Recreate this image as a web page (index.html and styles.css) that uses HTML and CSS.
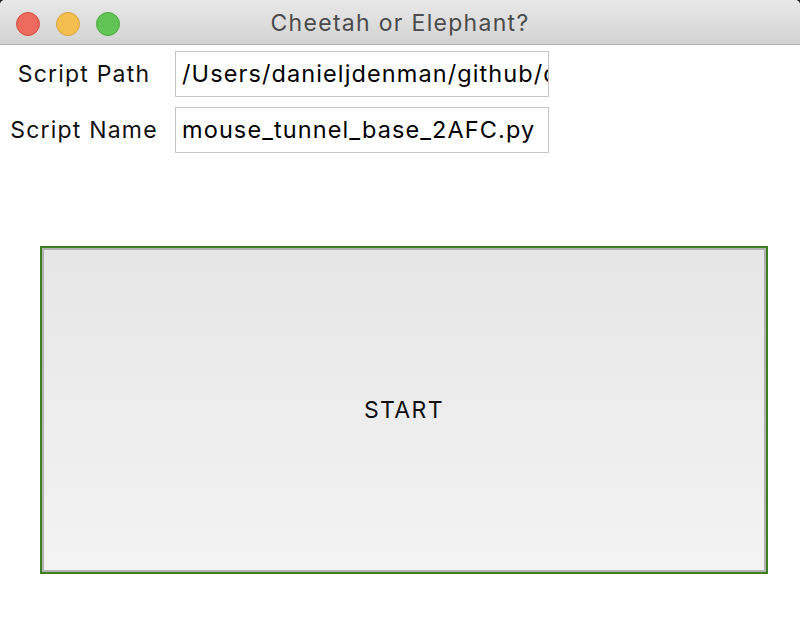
FILE: index.html
```html
<!DOCTYPE html>
<html>
<head>
<meta charset="utf-8">
<link rel="stylesheet" href="styles.css">
</head>
<body>
<div class="window">
  <div class="titlebar">
    <div class="lights">
      <span class="light red"></span>
      <span class="light yellow"></span>
      <span class="light green"></span>
    </div>
    <div class="title">Cheetah or Elephant?</div>
  </div>
  <div class="form">
    <label class="label">Script Path</label>
    <div class="input">/Users/danieljdenman/github/deepmouse</div>
    <label class="label">Script Name</label>
    <div class="input">mouse_tunnel_base_2AFC.py</div>
  </div>
  <div class="btnwrap">
    <button class="start">START</button>
  </div>
</div>
</body>
</html>
```
FILE: styles.css
```css
html, body {
  margin: 0;
  padding: 0;
  background: #1e1e1e;
}
.window {
  width: 800px;
  height: 644px;
  background: #ffffff;
  border-radius: 5px 5px 0 0;
  overflow: hidden;
  font-family: Inter, "Liberation Sans", sans-serif;
}
.titlebar {
  position: relative;
  height: 44px;
  background: linear-gradient(#e8e8e8, #d3d3d3);
  border-bottom: 1px solid #b1b1b1;
  display: flex;
  align-items: center;
  justify-content: center;
}
.lights {
  position: absolute;
  left: 16px;
  top: 12px;
  display: flex;
  gap: 16px;
}
.light {
  width: 24px;
  height: 24px;
  border-radius: 50%;
  box-sizing: border-box;
}
.red { background: #ed6a5e; border: 1px solid #d25145; }
.yellow { background: #f5bf4f; border: 1px solid #d6a03a; }
.green { background: #61c454; border: 1px solid #4ea63f; }
.title {
  font-size: 23px;
  color: #4b4b4b;
  padding-top: 1px;
  letter-spacing: 1.3px;
}
.form {
  display: grid;
  grid-template-columns: 168px 374px;
  column-gap: 7px;
  row-gap: 10px;
  padding-top: 6px;
  align-items: center;
}
.label {
  font-size: 23px;
  color: #111;
  text-align: center;
  letter-spacing: 1.2px;
}
.input {
  height: 46px;
  box-sizing: border-box;
  border: 1px solid #c6c6c6;
  font-size: 23.5px;
  color: #000;
  line-height: 44px;
  padding-left: 6px;
  white-space: nowrap;
  overflow: hidden;
  letter-spacing: 1.1px;
}
.btnwrap {
  padding: 93px 32px 0 40px;
}
.start {
  display: block;
  width: 728px;
  height: 328px;
  box-sizing: border-box;
  border: 2px solid #3e7f26;
  box-shadow: inset 0 0 0 2px #b2b2b2;
  background: linear-gradient(#e6e6e6, #f3f3f3);
  font-family: Inter, "Liberation Sans", sans-serif;
  font-size: 23px;
  letter-spacing: 1.4px;
  color: #111;
  padding: 0;
}
```
